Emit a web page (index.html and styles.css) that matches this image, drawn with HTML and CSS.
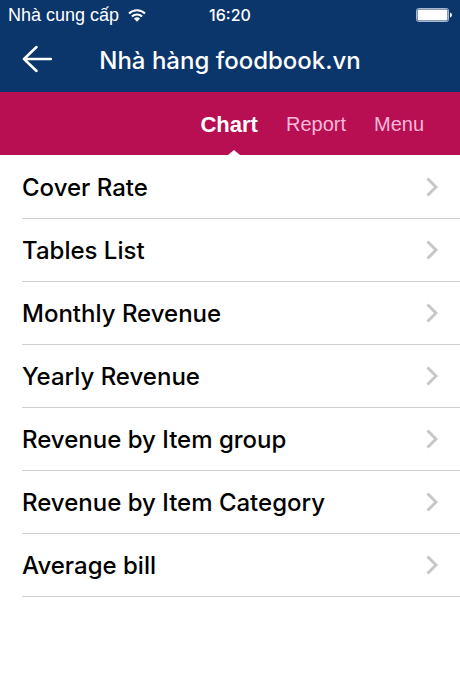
FILE: index.html
```html
<!DOCTYPE html>
<html lang="vi">
<head>
    <meta charset="UTF-8">
    <meta name="viewport" content="width=device-width, initial-scale=1.0">
    <title>Nhà hàng foodbook.vn</title>
    <link rel="stylesheet" href="styles.css">
</head>
<body>
    <header class="header">
        <div class="status-bar">
            <div class="carrier">
                <span>Nhà cung cấp</span>
                <svg class="wifi" viewBox="0 0 18 13" width="18" height="13" aria-hidden="true">
                    <path d="M1 4.6a11.4 11.4 0 0 1 16 0M3.9 7.6a7.2 7.2 0 0 1 10.2 0" fill="none" stroke="#fff" stroke-width="2.1"/>
                    <path d="M9 12.8L5.9 9.6a4.4 4.4 0 0 1 6.2 0z" fill="#fff"/>
                </svg>
            </div>
            <time class="clock">16:20</time>
            <svg class="battery" viewBox="0 0 36 14" width="36" height="14" aria-hidden="true">
                <rect x="0.5" y="0.5" width="32" height="13" rx="2" fill="none" stroke="#a9b8cf"/>
                <rect x="1.500" y="1.500" width="30" height="11" rx="1" fill="#fff"/>
                <path d="M34 4.5q2 .6 2 2.5t-2 2.5z" fill="#fff"/>
            </svg>
        </div>
        <div class="title-bar">
            <button type="button" class="back-btn" aria-label="Back">
                <svg viewBox="0 0 30 28" width="30" height="28" aria-hidden="true">
                    <path d="M14.5 2L2 14l12.500 12M2 14h27" fill="none" stroke="#fff" stroke-width="2.500" stroke-linecap="round" stroke-linejoin="round"/>
                </svg>
            </button>
            <h1>Nhà hàng foodbook.vn</h1>
        </div>
    </header>

    <nav class="tabs">
        <a href="#chart" class="tab active">Chart</a>
        <a href="#report" class="tab">Report</a>
        <a href="#menu" class="tab">Menu</a>
    </nav>

    <main>
        <ul class="list" id="chart">
            <li><a href="#">Cover Rate <svg class="chevron" viewBox="0 0 12 20"><path d="M1.500 1.500L10 10l-8.500 8.500"/></svg></a></li>
            <li><a href="#">Tables List <svg class="chevron" viewBox="0 0 12 20"><path d="M1.500 1.500L10 10l-8.500 8.500"/></svg></a></li>
            <li><a href="#">Monthly Revenue <svg class="chevron" viewBox="0 0 12 20"><path d="M1.500 1.500L10 10l-8.500 8.500"/></svg></a></li>
            <li><a href="#">Yearly Revenue <svg class="chevron" viewBox="0 0 12 20"><path d="M1.500 1.500L10 10l-8.500 8.500"/></svg></a></li>
            <li><a href="#">Revenue by Item group <svg class="chevron" viewBox="0 0 12 20"><path d="M1.500 1.500L10 10l-8.500 8.500"/></svg></a></li>
            <li><a href="#">Revenue by Item Category <svg class="chevron" viewBox="0 0 12 20"><path d="M1.500 1.500L10 10l-8.500 8.500"/></svg></a></li>
            <li><a href="#">Average bill <svg class="chevron" viewBox="0 0 12 20"><path d="M1.500 1.500L10 10l-8.500 8.500"/></svg></a></li>
        </ul>
    </main>
</body>
</html>
```

FILE: styles.css
```css
* {
    box-sizing: border-box;
}

body {
    margin: 0;
    background-color: #fff;
    color: #000;
    font-family: Inter, "Liberation Sans", sans-serif;
}

a {
    color: inherit;
    text-decoration: none;
}

.header {
    background-color: #0b366b;
    color: #fff;
}

.status-bar {
    display: grid;
    grid-template-columns: 1fr auto 1fr;
    align-items: center;
    height: 30px;
    padding: 0 8px;
    font-size: 18px;
    line-height: 30px;
}

.carrier {
    display: flex;
    align-items: center;
    gap: 9px;
    font-family: "Liberation Sans", sans-serif;
}

.clock {
    font-size: 16px;
    font-weight: 500;
}

.battery {
    justify-self: end;
}

.title-bar {
    display: grid;
    grid-template-columns: 30px 1fr 30px;
    align-items: center;
    height: 62px;
    padding: 0 22px;
}

.title-bar h1 {
    margin: 0;
    font-size: 24px;
    font-weight: 500;
    line-height: 62px;
    text-align: center;
}

.back-btn {
    display: flex;
    padding: 0 0 4px;
    border: none;
    background: none;
    cursor: pointer;
}

.tabs {
    display: flex;
    justify-content: flex-end;
    gap: 28px;
    height: 63px;
    padding: 0 36px;
    background-color: #b80e52;
    font-family: "Liberation Sans", sans-serif;
}

.tab {
    position: relative;
    color: #fcb9da;
    font-size: 20px;
    line-height: 65px;
}

.tab.active {
    color: #fff;
    font-size: 22px;
    font-weight: bold;
}

/* Pointer under the selected tab */
.tab.active::after {
    content: "";
    position: absolute;
    bottom: 0;
    left: 50%;
    margin-left: -1px;
    border: 6px solid transparent;
    border-top: none;
    border-bottom: 5px solid #fff;
}

.list {
    margin: 0;
    padding: 1px 0 0 22px;
    list-style: none;
}

.list a {
    display: flex;
    justify-content: space-between;
    align-items: center;
    height: 63px;
    padding-right: 22px;
    border-bottom: 1px solid #d0d0d0;
    font-size: 24px;
    font-weight: 500;
}

.chevron {
    width: 12px;
    height: 20px;
    fill: none;
    stroke: #c7c7c7;
    stroke-width: 3;
}
```
